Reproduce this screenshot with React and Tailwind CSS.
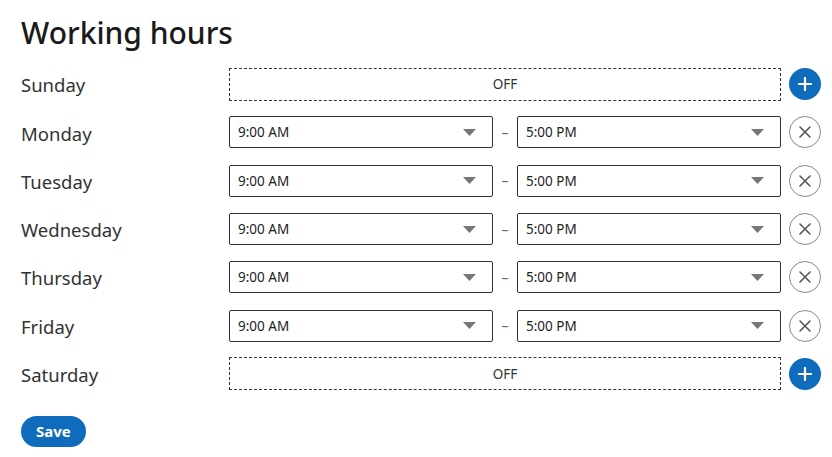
import React from 'react';

const days = [
    { name: 'Sunday', off: true },
    { name: 'Monday' },
    { name: 'Tuesday' },
    { name: 'Wednesday' },
    { name: 'Thursday' },
    { name: 'Friday' },
    { name: 'Saturday', off: true },
];

function TimeSelect({ value }) {
    return (
        <div className="flex-1 h-[32px] flex items-center justify-between border border-[#333] rounded-[2px] pl-[8px] pr-[16px] text-[13.5px] text-[#222] bg-white">
            <span>{value}</span>
            <svg width="13" height="7" viewBox="0 0 13 7">
                <path d="M0 0 L13 0 L6.5 7 Z" fill="#777" />
            </svg>
        </div>
    );
}

function AddButton() {
    return (
        <button className="w-[32px] h-[32px] rounded-full bg-[#0f6cbd] flex items-center justify-center shrink-0">
            <svg width="14" height="14" viewBox="0 0 14 14">
                <path d="M7 1 V13 M1 7 H13" stroke="white" strokeWidth="2.2" strokeLinecap="round" />
            </svg>
        </button>
    );
}

function RemoveButton() {
    return (
        <button className="w-[32px] h-[32px] rounded-full border border-[#8a8a8a] bg-white flex items-center justify-center shrink-0">
            <svg width="14" height="14" viewBox="0 0 14 14">
                <path d="M2 2 L12 12 M12 2 L2 12" stroke="#555" strokeWidth="1.6" strokeLinecap="round" />
            </svg>
        </button>
    );
}

export default function App() {
    return (
        <div className="w-[832px] h-[457px] bg-white pl-[21px] pr-[11px] pt-[13px] font-['Noto_Sans',sans-serif] text-[#242424]">
            <h1 className="text-[30px] font-medium leading-[40px] h-[47px] text-[#1a1a1a]">Working hours</h1>

            <div className="flex flex-col">
                {days.map((day) => (
                    <div key={day.name} className="flex items-center h-[48.3px]">
                        <div className="w-[208px] text-[18.5px] text-[#333] pt-[2px]">{day.name}</div>
                        <div className="flex-1 flex items-center gap-[8px]">
                            {day.off ? (
                                <div className="flex-1 h-[33px] border border-dashed border-[#333] flex items-center justify-center text-[13.5px] text-[#333]">
                                    OFF
                                </div>
                            ) : (
                                <div className="flex-1 flex items-center">
                                    <TimeSelect value="9:00 AM" />
                                    <span className="w-[24px] text-center text-[14px] text-[#666]">–</span>
                                    <TimeSelect value="5:00 PM" />
                                </div>
                            )}
                            {day.off ? <AddButton /> : <RemoveButton />}
                        </div>
                    </div>
                ))}
            </div>

            <button className="mt-[18px] h-[31px] px-[15px] rounded-full bg-[#0f6cbd] text-white text-[15px] font-bold">
                Save
            </button>
        </div>
    );
}
